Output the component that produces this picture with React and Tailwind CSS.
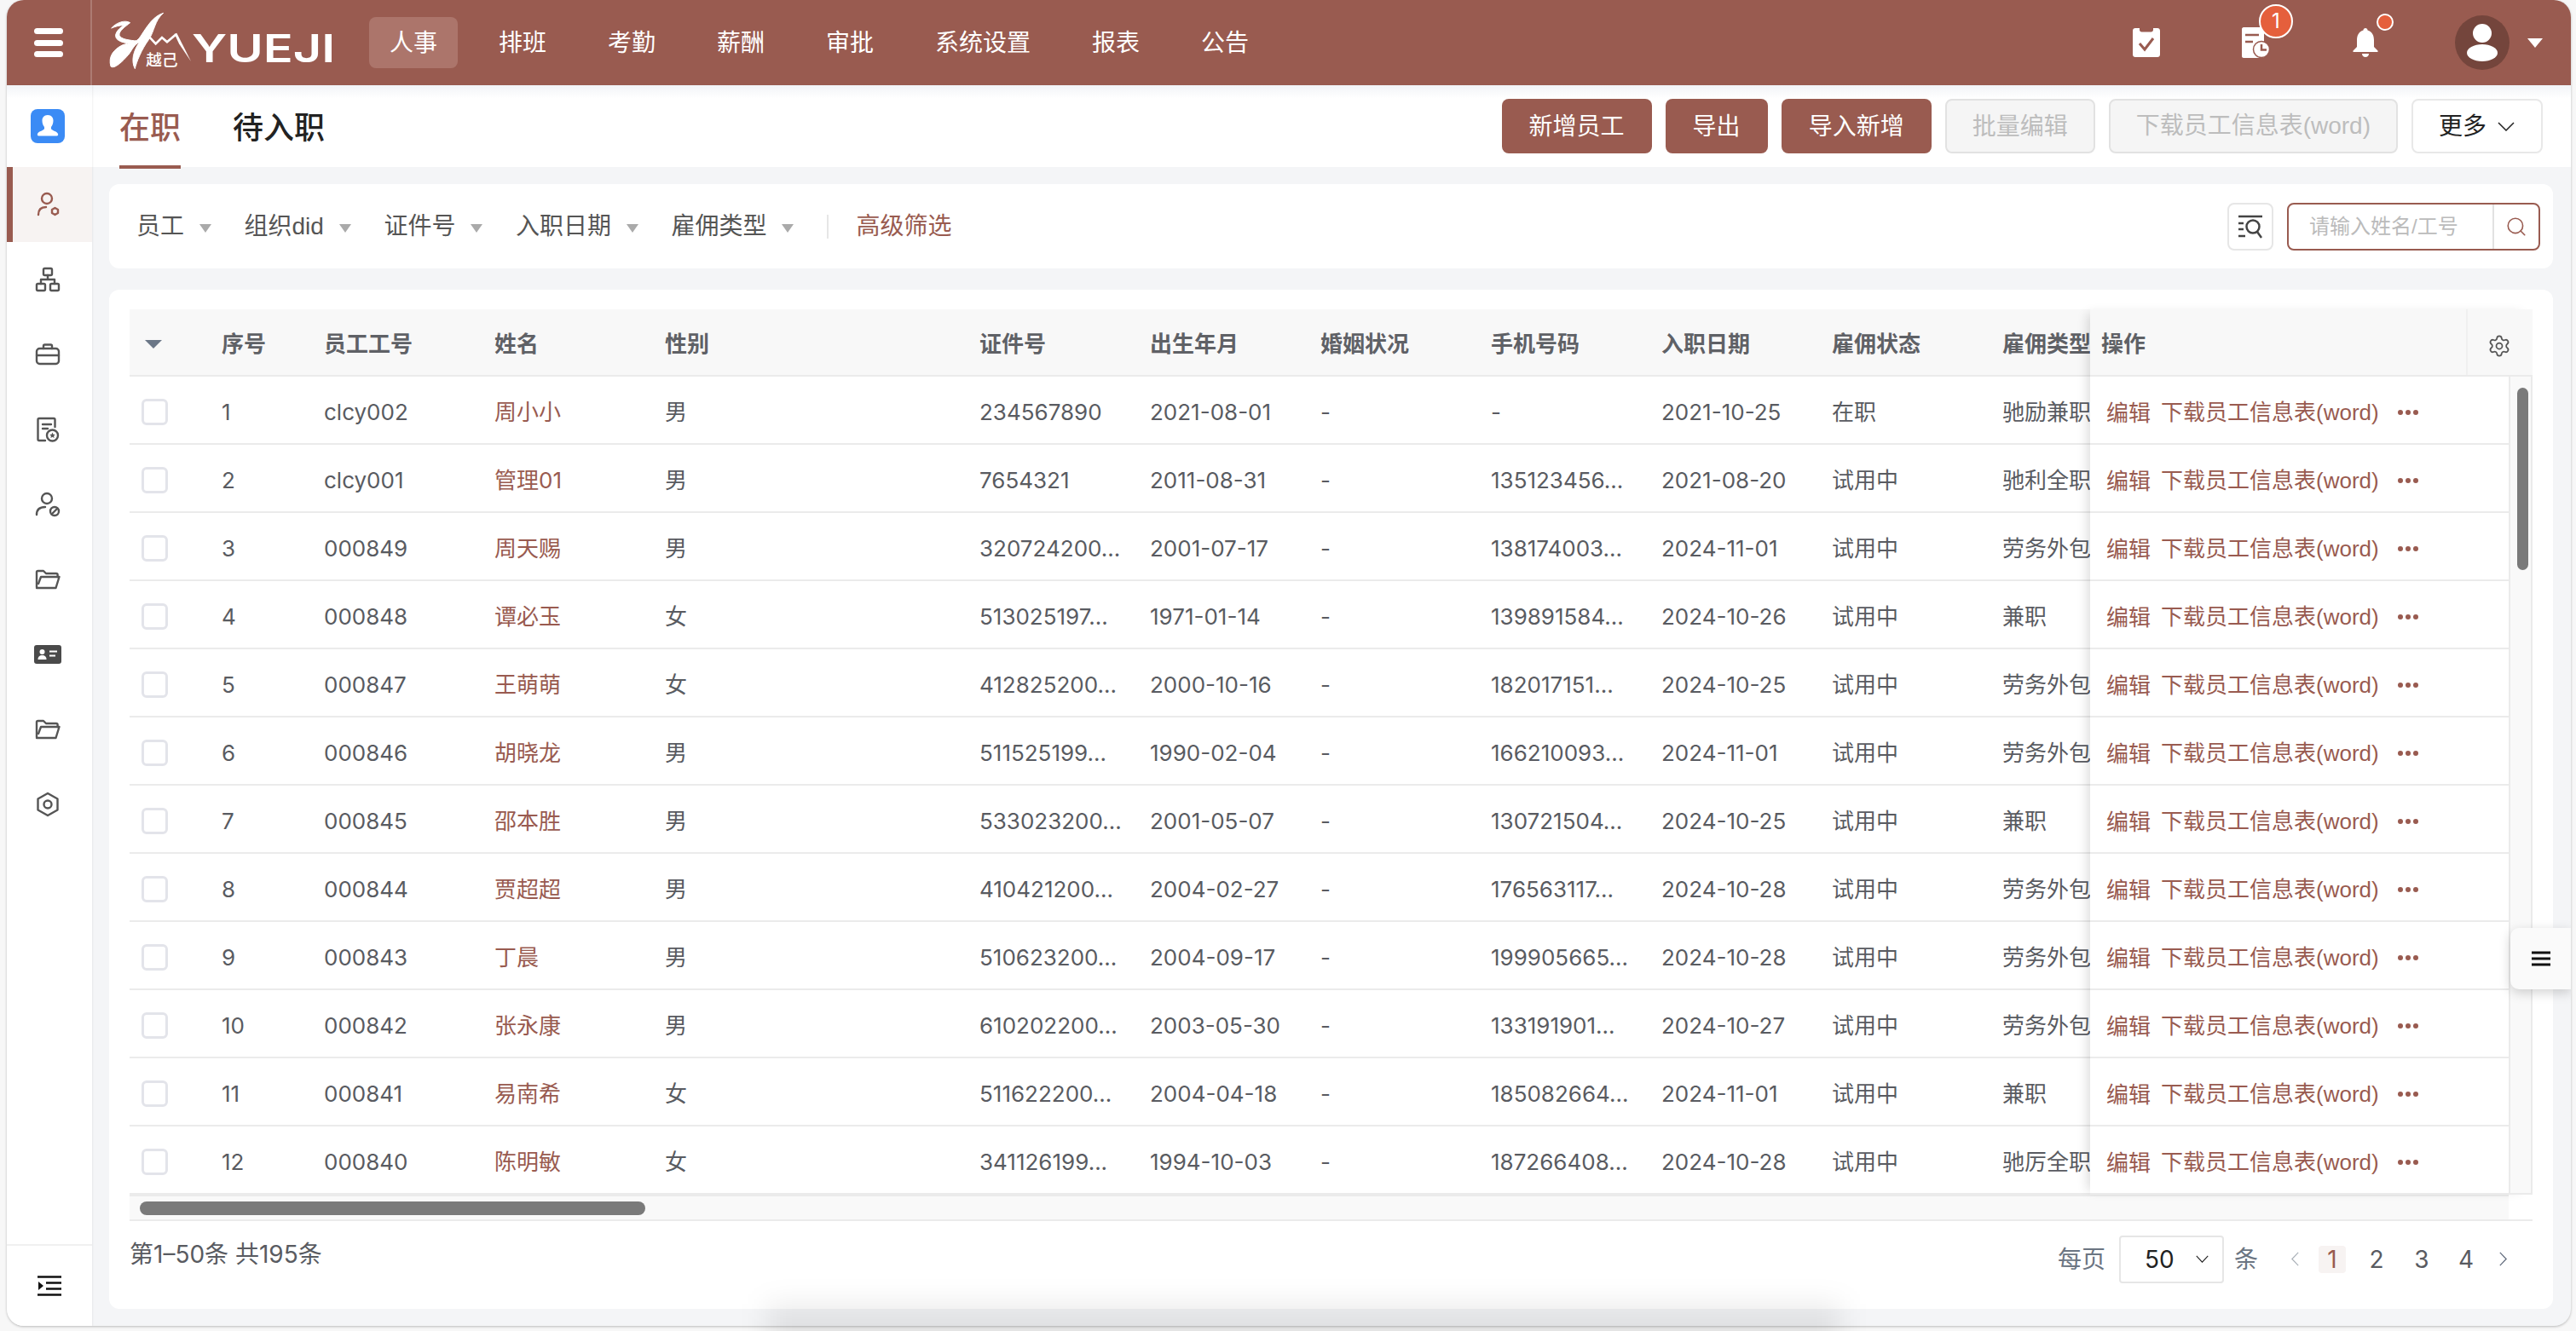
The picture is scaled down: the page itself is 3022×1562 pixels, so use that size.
import React from 'react';
import { Search, Settings } from 'lucide-react';

const NAV = ['人事', '排班', '考勤', '薪酬', '审批', '系统设置', '报表', '公告'];

const ROWS = [
  ['1', 'clcy002', '周小小', '男', '234567890', '2021-08-01', '-', '-', '2021-10-25', '在职', '驰励兼职'],
  ['2', 'clcy001', '管理01', '男', '7654321', '2011-08-31', '-', '135123456...', '2021-08-20', '试用中', '驰利全职'],
  ['3', '000849', '周天赐', '男', '320724200...', '2001-07-17', '-', '138174003...', '2024-11-01', '试用中', '劳务外包'],
  ['4', '000848', '谭必玉', '女', '513025197...', '1971-01-14', '-', '139891584...', '2024-10-26', '试用中', '兼职'],
  ['5', '000847', '王萌萌', '女', '412825200...', '2000-10-16', '-', '182017151...', '2024-10-25', '试用中', '劳务外包'],
  ['6', '000846', '胡晓龙', '男', '511525199...', '1990-02-04', '-', '166210093...', '2024-11-01', '试用中', '劳务外包'],
  ['7', '000845', '邵本胜', '男', '533023200...', '2001-05-07', '-', '130721504...', '2024-10-25', '试用中', '兼职'],
  ['8', '000844', '贾超超', '男', '410421200...', '2004-02-27', '-', '176563117...', '2024-10-28', '试用中', '劳务外包'],
  ['9', '000843', '丁晨', '男', '510623200...', '2004-09-17', '-', '199905665...', '2024-10-28', '试用中', '劳务外包'],
  ['10', '000842', '张永康', '男', '610202200...', '2003-05-30', '-', '133191901...', '2024-10-27', '试用中', '劳务外包'],
  ['11', '000841', '易南希', '女', '511622200...', '2004-04-18', '-', '185082664...', '2024-11-01', '试用中', '兼职'],
  ['12', '000840', '陈明敏', '女', '341126199...', '1994-10-03', '-', '187266408...', '2024-10-28', '试用中', '驰厉全职'],
];

const HEADERS = ['序号', '员工工号', '姓名', '性别', '证件号', '出生年月', '婚姻状况', '手机号码', '入职日期', '雇佣状态', '雇佣类型'];
const FILTERS = ['员工', '组织did', '证件号', '入职日期', '雇佣类型'];

const GRID = 'grid grid-cols-[96px_120px_200px_200px_369px_200px_200px_200px_200px_200px_200px_115px] items-center';

const Logo = () => (
  <svg viewBox="0 0 900 255" className="w-[300px] h-[85px]">
    <g fill="#fff" stroke="#fff" strokeWidth="3" strokeLinejoin="round">
      <path d="M245 22C210 32 188 68 166 102C150 130 125 125 100 135C70 150 50 175 60 210C72 220 100 195 125 165C135 150 145 130 160 125C140 155 130 190 145 218C150 195 168 150 194 115C214 85 214 48 245 22Z" />
      <path d="M62 75C80 55 110 45 128 56C110 70 88 85 90 100C94 115 130 118 150 120L135 128C105 130 70 118 78 95C82 82 95 72 105 65C90 65 75 70 62 75Z" />
    </g>
    <path fill="none" stroke="#fff" strokeWidth="8" d="M190 100L218 130L240 108L258 124L288 98" />
    <path fill="#fff" d="M284 95L292 92L342 192L300 130Z" />
    <text x="184" y="208" fill="#fff" fontSize="56" fontWeight="500">越己</text>
    <text x="345" y="195" fill="#fff" fontSize="136" fontWeight="600" textLength="505" lengthAdjust="spacingAndGlyphs">YUEJI</text>
  </svg>
);

const Ico = ({ children, color = '#555' }) => (
  <svg viewBox="0 0 32 32" className="w-[32px] h-[32px]" fill="none" stroke={color} strokeWidth="2.4" strokeLinecap="round" strokeLinejoin="round">
    {children}
  </svg>
);

const FolderOpen = () => (
  <Ico>
    <path d="M3 25V7.500C3 6.500 3.700 6 4.600 6H11l3 3h12c1 0 1.600.7 1.600 1.600V13" />
    <path d="M3 26h22.500l4-13H8L5 21" />
  </Ico>
);

const SIDE = [
  <Ico color="#995b50">
    <circle cx="15" cy="9" r="6" />
    <path d="M5 28c0-6 3-9 9-9" />
    <path d="M24.500 20l3.500 2v4l-3.500 2-3.500-2v-4z" />
  </Ico>,
  <Ico>
    <rect x="11" y="3" width="10" height="8" rx="1.500" />
    <rect x="3" y="21" width="10" height="8" rx="1.500" />
    <rect x="19" y="21" width="10" height="8" rx="1.500" />
    <path d="M16 11v5M8 21v-5h16v5" />
  </Ico>,
  <Ico>
    <rect x="3" y="9" width="26" height="18" rx="3.500" />
    <path d="M11 9V6c0-1 .6-1.500 1.500-1.500h7c1 0 1.500.5 1.500 1.500v3M3 17h26" />
  </Ico>,
  <Ico>
    <path d="M13 29H6c-1 0-1.500-.6-1.500-1.500v-23C4.500 3.600 5 3 6 3h17c1 0 1.500.6 1.500 1.500V13" />
    <path d="M10 10h10M10 15h6" />
    <circle cx="21.500" cy="23" r="6.500" />
    <path fill="#555" stroke="none" d="M21.500 19.500l1 2.300 2.400.2-1.800 1.600.5 2.400-2.100-1.200-2.100 1.200.5-2.400-1.800-1.600 2.400-.2z" />
  </Ico>,
  <Ico>
    <circle cx="15" cy="9" r="6" />
    <path d="M3 28c0-6 4-9 10-9" />
    <circle cx="24" cy="24" r="5" />
    <path d="M21.500 26.500l5-5" />
  </Ico>,
  <FolderOpen />,
  <svg viewBox="0 0 32 32" className="w-[32px] h-[32px]">
    <rect x="0" y="5" width="32" height="22" rx="3" fill="#4a4a4a" />
    <circle cx="9.500" cy="13" r="3" fill="#fff" />
    <path d="M4.500 22c0-3.500 2-5 5-5s5 1.500 5 5z" fill="#fff" />
    <path d="M18 12.500h9M18 17.500h7" stroke="#fff" strokeWidth="2.200" />
  </svg>,
  <FolderOpen />,
  <Ico>
    <path d="M16 3l11.500 6.500v13L16 29 4.500 22.500v-13z" />
    <circle cx="16" cy="16" r="4.500" />
  </Ico>,
];

const Caret = () => (
  <span className="w-0 h-0 border-x-[7px] border-x-transparent border-t-[10px] border-t-[#aaaaaa] ml-[18px] mt-[4px]" />
);

const Chev = ({ w, h, dir, color, className = '' }) => {
  const paths = { down: 'M1 1L10 10L19 1', left: 'M10 1L1 10L10 19', right: 'M1 1L10 10L1 19' };
  const box = dir === 'down' ? '0 0 20 11' : '0 0 11 20';
  return (
    <svg viewBox={box} style={{ width: w, height: h }} className={`shrink-0 ${className}`} fill="none" stroke={color} strokeWidth="1.500" preserveAspectRatio="none">
      <path d={paths[dir]} />
    </svg>
  );
};

const Word = () => <span className="font-['Liberation_Sans','Noto_Sans_CJK_SC',sans-serif]">下载员工信息表(word)</span>;

const Btn = ({ children, kind = 'primary', className = '' }) => {
  const styles = {
    primary: 'px-[32px] bg-[#995b50] text-white',
    disabled: 'px-[30px] bg-[#f5f5f5] border-2 border-[#e2e2e2] text-[#bdbdbd]',
    plain: 'px-[30px] bg-white border-2 border-[#e8e8e8] text-[#222222]',
  };
  return (
    <button className={`h-[64px] rounded-[8px] text-[28px] flex items-center whitespace-nowrap ${styles[kind]} ${className}`}>
      {children}
    </button>
  );
};

const Checkbox = () => (
  <span className="block w-[31px] h-[31px] ml-[14px] rounded-[6px] border-[3px] border-[#e3e4ea] bg-white" />
);

const App = () => (
  <div className="relative w-[3022px] h-[1562px] pl-[8px] pr-[6px] pb-[6px] bg-[#f7f7f7] font-['Inter','Noto_Sans_CJK_SC',sans-serif] overflow-hidden">
    <div className="relative flex flex-col h-full rounded-[20px] overflow-hidden bg-[#f4f5f7] shadow-[0_1px_3px_rgba(0,0,0,0.25)]">
      {/* top bar */}
      <header className="flex items-center h-[100px] shrink-0 bg-[#995b50]">
        <div className="flex flex-col justify-between w-[100px] h-full py-[33px] px-[32px] border-r-2 border-[#ad7b72] shrink-0">
          <span className="block h-[7px] rounded-full bg-white" />
          <span className="block h-[7px] rounded-full bg-white" />
          <span className="block h-[7px] rounded-full bg-white" />
        </div>
        <div className="ml-[2px] shrink-0">
          <Logo />
        </div>
        <nav className="flex items-center gap-[24px] ml-[23px] text-[28px] text-white">
          {NAV.map((n, i) => (
            <span key={n} className={`h-[60px] px-[24px] flex items-center rounded-[8px] whitespace-nowrap ${i === 0 ? 'bg-[#ac756b]' : ''}`}>{n}</span>
          ))}
        </nav>
        <div className="flex items-center ml-auto pr-[33px]">
          <svg viewBox="0 0 32 34" className="w-[32px] h-[34px]">
            <path fill="#fff" d="M3 0h5v2c0 1.500 1 2.500 2.500 2.500h11C23 4.500 24 3.500 24 2V0h5c1.700 0 3 1.300 3 3v28c0 1.700-1.300 3-3 3H3c-1.700 0-3-1.300-3-3V3c0-1.700 1.300-3 3-3z" />
            <path fill="none" stroke="#995b50" strokeWidth="3" d="M8 18l6 7 10-13" />
          </svg>
          <div className="relative w-[32px] h-[36px] ml-[96px]">
            <svg viewBox="0 0 32 36" className="w-[32px] h-[36px]">
              <path fill="#fff" d="M2 0h22c1 0 2 1 2 2v34H2c-1 0-2-1-2-2V2C0 1 1 0 2 0z" />
              <path stroke="#995b50" strokeWidth="2.500" d="M4 9h16M4 17h9" />
              <circle cx="23" cy="26" r="9.500" fill="#fff" stroke="#995b50" strokeWidth="1.500" />
              <path fill="none" stroke="#995b50" strokeWidth="2.500" d="M23 20v6.500h6" />
            </svg>
            <span className="absolute left-[20px] top-[-27px] w-[40px] h-[40px] rounded-full bg-[#e55f3c] border-2 border-white text-white text-[24px] flex items-center justify-center">1</span>
          </div>
          <div className="relative w-[30px] h-[34px] ml-[98px]">
            <svg viewBox="0 0 30 34" className="w-[30px] h-[34px]">
              <path fill="#fff" d="M15 0c1.500 0 2.500 1 2.500 2.500C23 4 25 9 25 14v8l4.500 4.500V28H.5v-1.500L5 22v-8c0-5 2-10 7.500-11.500C12.500 1 13.500 0 15 0z" />
              <path fill="#fff" d="M11 30h8c0 2.500-1.800 4-4 4s-4-1.500-4-4z" />
            </svg>
            <span className="absolute left-[28px] top-[-17px] w-[20px] h-[20px] rounded-full bg-[#e55f3c] border-2 border-white" />
          </div>
          <div className="relative flex items-center justify-center w-[64px] h-[64px] ml-[90px] rounded-full bg-[#74453c] overflow-hidden">
            <svg viewBox="0 0 64 64" className="w-[64px] h-[64px]">
              <ellipse cx="32" cy="21" rx="11" ry="11" fill="#fff" />
              <ellipse cx="32" cy="44" rx="18" ry="10" fill="#fff" />
            </svg>
          </div>
          <span className="w-0 h-0 ml-[21px] border-x-[9px] border-x-transparent border-t-[11px] border-t-white" />
        </div>
      </header>

      <div className="flex flex-1 min-h-0">
        {/* side rail */}
        <aside className="flex flex-col w-[100px] shrink-0 bg-white shadow-[1px_0_2px_rgba(0,0,0,0.06)] z-10">
          <div className="flex items-center justify-center h-[96px] bg-linear-to-b from-[#f2f4f7] to-white to-[16%]">
            <svg viewBox="0 0 40 40" className="w-[40px] h-[40px] mr-[4px]">
              <rect width="40" height="40" rx="8" fill="#3b8bf5" />
              <path fill="#fff" d="M20 7c4.500 0 6.500 3 6.500 6.500 0 3-1 5.500-2.500 7.500v2c0 2 7 3 8 6 .5 1.500 0 2.500-1.500 2.500h-21c-1.500 0-2-1-1.500-2.500 1-3 8-4 8-6v-2c-1.500-2-2.500-4.500-2.500-7.500C13.500 10 15.500 7 20 7z" />
            </svg>
          </div>
          {SIDE.map((icon, i) => (
            <div key={i} className={`flex items-center justify-center h-[88px] pr-[4px] ${i === 0 ? 'bg-[#f7f3f2] shadow-[inset_7px_0_0_#995b50]' : ''}`}>
              {icon}
            </div>
          ))}
          <div className="mt-auto flex items-center justify-center h-[96px] border-t-2 border-[#f0f0f0]">
            <svg viewBox="0 0 28 24" className="w-[28px] h-[24px]">
              <path stroke="#111" strokeWidth="2.500" d="M0 1.500h28M0 22.500h28M10 8.500h18M10 15.500h18" />
              <path fill="#111" d="M1 7l6 5-6 5z" />
            </svg>
          </div>
        </aside>

        <main className="flex flex-col flex-1 min-w-0">
          {/* tabs + actions */}
          <div className="flex items-start justify-between h-[96px] shrink-0 pl-[32px] pr-[33px] bg-linear-to-b from-[#f2f4f7] to-white to-[16%]">
            <div className="flex gap-[61px] text-[36px] font-medium">
              <span className="flex items-center h-[98px] pt-[6px] border-b-4 border-[#995b50] text-[#995b50]">在职</span>
              <span className="flex items-center h-[98px] pt-[6px] border-b-4 border-transparent text-[#222222]">待入职</span>
            </div>
            <div className="flex gap-[16px] pt-[16px]">
              <Btn>新增员工</Btn>
              <Btn>导出</Btn>
              <Btn>导入新增</Btn>
              <Btn kind="disabled">批量编辑</Btn>
              <Btn kind="disabled"><Word /></Btn>
              <Btn kind="plain" className="gap-[13px] w-[154px]">更多<Chev w={20} h={11} dir="down" color="#222222" /></Btn>
            </div>
          </div>

          {/* filter bar */}
          <div className="flex items-center h-[99px] shrink-0 mt-[20px] ml-[20px] mr-[21px] pl-[32px] pr-[15px] rounded-[12px] bg-white text-[28px] text-[#555555] font-['Liberation_Sans','Noto_Sans_CJK_SC',sans-serif]">
            <div className="flex items-center gap-[38.5px]">
              {FILTERS.map(f => (
                <span key={f} className="flex items-center whitespace-nowrap">{f}<Caret /></span>
              ))}
            </div>
            <span className="w-[2px] h-[28px] ml-[39px] bg-[#e6e6e6]" />
            <span className="ml-[32px] text-[#995b50]">高级筛选</span>
            <div className="flex items-center gap-[16px] ml-auto">
              <button className="flex items-center justify-center w-[54px] h-[56px] rounded-[8px] border-2 border-[#e6e6e6]">
                <svg viewBox="0 0 30 30" className="w-[30px] h-[30px]" fill="none" stroke="#444" strokeWidth="2.500">
                  <path d="M1 3h28M1 11h6M1 18h6M1 26h8" />
                  <circle cx="18" cy="15" r="7.500" />
                  <path d="M23 21l5 7" />
                </svg>
              </button>
              <div className="flex items-center w-[297px] h-[56px] rounded-[8px] border-2 border-[#995b50]">
                <span className="flex-1 pl-[24px] text-[24px] text-[#bbbbbb] whitespace-nowrap">请输入姓名/工号</span>
                <span className="flex items-center justify-center w-[54px] h-full border-l-2 border-[#e2e2e2]">
                  <Search size={26} color="#995b50" strokeWidth={1.5} />
                </span>
              </div>
            </div>
          </div>

          {/* table card */}
          <section className="flex flex-col flex-1 min-h-0 mt-[25px] mb-[20px] ml-[20px] mr-[21px] pt-[23px] px-[24px] rounded-[12px] bg-white text-[26px] text-[#595b61]">
            <div className="flex">
              <div className="w-[2300px] shrink-0 overflow-hidden">
                <div className={`${GRID} h-[79px] pt-[4px] bg-[#f8f8f8] border-b-2 border-[#ebebeb] font-semibold text-[#5f6166]`}>
                  <span className="w-0 h-0 ml-[18px] border-x-[10px] border-x-transparent border-t-[10px] border-t-[#6b7787]" />
                  {HEADERS.map(h => <span key={h} className="pl-[12px] whitespace-nowrap overflow-hidden">{h}</span>)}
                </div>
                {ROWS.map(r => (
                  <div key={r[0]} className={`${GRID} h-[80px] pt-[4px] border-b-2 border-[#ebebeb]`}>
                    <Checkbox />
                    {r.map((c, i) => (
                      <span key={i} className={`pl-[12px] whitespace-nowrap overflow-hidden ${i === 2 ? 'text-[#995b50]' : ''}`}>{c}</span>
                    ))}
                  </div>
                ))}
              </div>
              <div className="relative z-10 flex-1 min-w-0 bg-white shadow-[-8px_0_12px_-5px_rgba(0,0,0,0.14)]">
                <div className="flex items-center h-[79px] bg-[#f8f8f8] border-b-2 border-[#ebebeb] font-semibold text-[#5f6166]">
                  <span className="pl-[13px] pt-[4px]">操作</span>
                  <span className="flex items-center justify-center w-[78px] h-full pt-[8px] pr-[2px] ml-auto border-l-2 border-[#f0f0f0]">
                    <Settings size={28} color="#555555" strokeWidth={1.5} />
                  </span>
                </div>
                <div className="flex">
                  <div className="w-[491px] shrink-0">
                    {ROWS.map(r => (
                      <div key={r[0]} className="flex items-center h-[80px] pt-[6px] pl-[19px] border-b-2 border-[#ebebeb] text-[#995b50] whitespace-nowrap">
                        <span>编辑</span>
                        <span className="ml-[12px]"><Word /></span>
                        <span className="flex gap-[3px] ml-[22px]">
                          <span className="w-[6px] h-[6px] rounded-full bg-[#995b50]" />
                          <span className="w-[6px] h-[6px] rounded-full bg-[#995b50]" />
                          <span className="w-[6px] h-[6px] rounded-full bg-[#995b50]" />
                        </span>
                      </div>
                    ))}
                  </div>
                  <div className="flex-1 pt-[13px] pl-[8px] border-l-2 border-[#ebebeb] border-b-2 border-r-2 bg-[#f9f9f9]">
                    <div className="w-[13px] h-[214px] rounded-full bg-[#7a7a7a]" />
                  </div>
                </div>
              </div>
            </div>
            {/* horizontal scroll */}
            <div className="flex items-center h-[29px] shrink-0 pl-[12px] mr-[28px] bg-[#f9f9f9] border-t-2 border-[#ebebeb]">
              <div className="w-[593px] h-[16px] rounded-full bg-[#7a7a7a]" />
            </div>
            <div className="h-[2px] shrink-0 bg-[#ebebeb]" />
            {/* pagination */}
            <div className="flex items-center justify-between flex-1 pb-[14px] pr-[23px] text-[28px]">
              <span className="mb-[12px]">第1–50条 共195条</span>
              <div className="flex items-center">
                <span className="text-[#6b7582]">每页</span>
                <span className="flex items-center justify-between w-[123px] h-[56px] ml-[16px] pl-[28px] pr-[16px] rounded-[4px] border-2 border-[#e6e6e6] text-[#222222]">
                  50<Chev w={15} h={9} dir="down" color="#222222" />
                </span>
                <span className="ml-[12px] text-[#6b7582]">条</span>
                <span className="flex justify-center w-[24px] ml-[31px]"><Chev w={9} h={17} dir="left" color="#aab0b8" /></span>
                <span className="flex items-center justify-center w-[32px] h-[32px] ml-[16px] rounded-[4px] bg-[#f7f3f2] text-[#995b50]">1</span>
                <span className="flex items-center justify-center w-[32px] ml-[20px]">2</span>
                <span className="flex items-center justify-center w-[32px] ml-[21px]">3</span>
                <span className="flex items-center justify-center w-[32px] ml-[20px]">4</span>
                <span className="flex justify-center w-[24px] ml-[15px]"><Chev w={9} h={17} dir="right" color="#5c6678" /></span>
              </div>
            </div>
          </section>
        </main>
      </div>

      {/* floating panel handle */}
      <button className="absolute right-0 top-[1089px] z-20 flex items-center justify-center w-[71px] h-[72px] rounded-l-[10px] bg-[#fafafa] shadow-[0_4px_14px_rgba(0,0,0,0.18)]">
        <svg viewBox="0 0 22 18" className="w-[22px] h-[18px]">
          <path stroke="#111" strokeWidth="2.800" d="M0 2h22M0 9h22M0 16h22" />
        </svg>
      </button>
    </div>
    {/* soft shadow from the window under this one */}
    <div className="absolute left-[900px] top-[1530px] w-[1260px] h-[60px] bg-black/[0.08] blur-[16px] pointer-events-none" />
  </div>
);

export default App;
